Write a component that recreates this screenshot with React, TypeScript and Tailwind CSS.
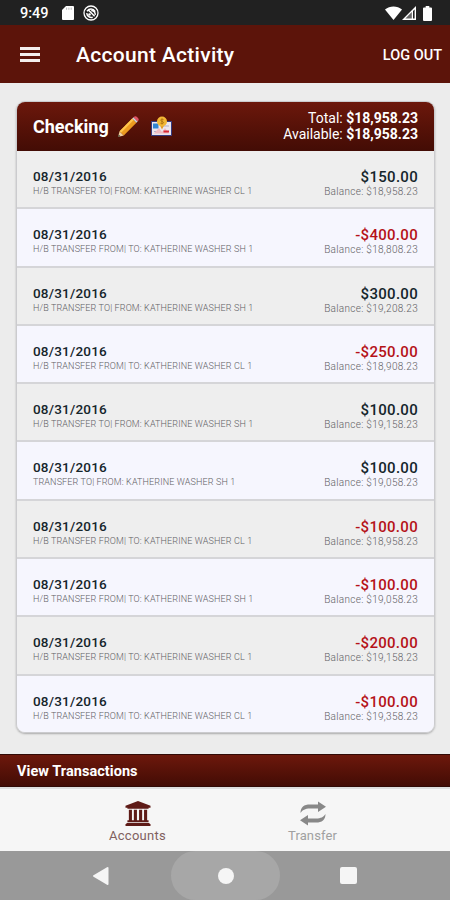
import React from "react";
import { clsx } from "clsx";

type Transaction = {
  id: number;
  date: string;
  description: string;
  amount: string;
  balance: string;
};

const transactions: Transaction[] = [
  { id: 1, date: "08/31/2016", description: "H/B TRANSFER TO| FROM: KATHERINE WASHER CL 1", amount: "$150.00", balance: "$18,958.23" },
  { id: 2, date: "08/31/2016", description: "H/B TRANSFER FROM| TO: KATHERINE WASHER SH 1", amount: "-$400.00", balance: "$18,808.23" },
  { id: 3, date: "08/31/2016", description: "H/B TRANSFER TO| FROM: KATHERINE WASHER SH 1", amount: "$300.00", balance: "$19,208.23" },
  { id: 4, date: "08/31/2016", description: "H/B TRANSFER FROM| TO: KATHERINE WASHER CL 1", amount: "-$250.00", balance: "$18,908.23" },
  { id: 5, date: "08/31/2016", description: "H/B TRANSFER TO| FROM: KATHERINE WASHER SH 1", amount: "$100.00", balance: "$19,158.23" },
  { id: 6, date: "08/31/2016", description: "TRANSFER TO| FROM: KATHERINE WASHER SH 1", amount: "$100.00", balance: "$19,058.23" },
  { id: 7, date: "08/31/2016", description: "H/B TRANSFER FROM| TO: KATHERINE WASHER CL 1", amount: "-$100.00", balance: "$18,958.23" },
  { id: 8, date: "08/31/2016", description: "H/B TRANSFER FROM| TO: KATHERINE WASHER SH 1", amount: "-$100.00", balance: "$19,058.23" },
  { id: 9, date: "08/31/2016", description: "H/B TRANSFER FROM| TO: KATHERINE WASHER CL 1", amount: "-$200.00", balance: "$19,158.23" },
  { id: 10, date: "08/31/2016", description: "H/B TRANSFER FROM| TO: KATHERINE WASHER CL 1", amount: "-$100.00", balance: "$19,358.23" },
];

function StatusBar() {
  return (
    <div className="flex h-[25px] shrink-0 items-center bg-[#212121] pt-px pr-[18px] pl-[20px] text-white">
      <span className="w-[42px] pt-[2px] text-[14.500px] leading-none font-medium">9:49</span>
      <svg className="h-[14px] w-[12px]" viewBox="0 0 12 14" fill="currentColor">
        <path d="M4 0h7a1 1 0 0 1 1 1v12a1 1 0 0 1-1 1H1a1 1 0 0 1-1-1V4z" />
        <path d="M4.6 1.6v2.2M6.9 1.6v2.2M9.2 1.6v2.2" stroke="#999" strokeWidth="0.7" />
      </svg>
      <svg className="ml-[9px] size-[16px]" viewBox="0 0 16 16" fill="none" stroke="currentColor">
        <circle cx="8" cy="8" r="7" strokeWidth="1.3" />
        <path d="M4 6.2C6 3.5 10 3 12.2 6.7M3.7 8.2c.4 3 3.2 4.8 6 4M5.2 4.8l6.4 6.4M8.2 5.6c2.4 0 4.3 1.8 4 4.2" strokeWidth="1.5" />
        <circle cx="6.5" cy="9.5" r="1.3" fill="currentColor" stroke="none" />
      </svg>
      <div className="ml-auto flex items-center">
        <svg className="h-[14px] w-[17px]" viewBox="0 0 17 14" fill="currentColor">
          <path d="M0 3.6C4.8-.6 12.2-.6 17 3.6L8.5 14z" />
        </svg>
        <svg className="h-[14px] w-[14px]" viewBox="0 0 14 14" fill="currentColor">
          <path d="M14 0v14H0z" />
          <path d="M9.8 6v6.400H3.400z" fill="#666" />
          <path d="M11 5 12.600 3.400v9H11z" fill="#212121" />
        </svg>
        <svg className="ml-[7px] h-[15px] w-[9px]" viewBox="0 0 9 15" fill="currentColor">
          <path d="M2.7 0h3.6v1.5H8a1 1 0 0 1 1 1V14a1 1 0 0 1-1 1H1a1 1 0 0 1-1-1V2.500a1 1 0 0 1 1-1h1.700z" />
        </svg>
      </div>
    </div>
  );
}

function PencilIcon() {
  return (
    <svg className="h-[21px] w-[21px]" viewBox="0 0 21 21">
      <path d="M0 21 1.600 15.200 5.800 19.400z" fill="#f0cfa0" />
      <path d="M0 21 .7 18.500 2.500 20.300z" fill="#443" />
      <path d="M1.600 15.200 14.200 2.600 18.400 6.800 5.800 19.400z" fill="#eb9a20" />
      <path d="M1.600 15.200 14.200 2.600 15.700 4.100 3.100 16.700z" fill="#ffc64c" />
      <path d="M14.200 2.600 15.500 1.300 19.700 5.500 18.400 6.800z" fill="#cfd5d8" />
      <path d="M15.500 1.300C16.900-.1 18 .1 19.500 1.500S21 4.200 19.700 5.500z" fill="#df5364" />
    </svg>
  );
}

function StatementIcon() {
  return (
    <svg className="h-[20px] w-[21px]" viewBox="0 0 21 20">
      <path d="M.5 5.500h20v14H.5z" fill="#ece6ed" stroke="#343a80" />
      <path d="M2 7.500h5.500v5H2z" fill="#3285d2" />
      <path d="M3 15.500h5M12 10h6" stroke="#b0adc6" />
      <path d="M3 17.500 8 12l3 4 3-4 4 5.500" fill="#eebbc1" />
      <path d="M12.500 14.500h5.500v2h-5.500z" fill="#d72835" />
      <path d="M9 9.500h4l-2 4z" fill="#e39a23" />
      <circle cx="11" cy="5.500" r="5" fill="#f2b735" />
      <path d="M12.500 3.700c-3-1.500-3.600 1.200-1.500 1.700 2.500.6 1.700 3-1.500 1.800M11 2.500v6" fill="none" stroke="#b17413" strokeWidth="1" />
    </svg>
  );
}

function TransactionRow({ item, index }: { item: Transaction; index: number }) {
  return (
    <div
      className={clsx(
        "flex min-h-0 flex-1 justify-between border-[#d5d5d8] px-[16px] pt-[17px]",
        index % 2 === 0 ? "bg-[#eeeeee]" : "bg-[#f6f6fe]",
        index > 0 && "border-t-2"
      )}
    >
      <div>
        <p className="text-[13.500px] leading-[16px] font-medium tracking-[0.2px] text-[#15252b]">{item.date}</p>
        <p className="text-[9px] leading-[15px] font-light tracking-[0.13px] whitespace-nowrap text-[#5f6064]">{item.description}</p>
      </div>
      <div className="text-right">
        <p
          className={clsx(
            "text-[15px] leading-[18px] font-medium tracking-[0.3px]",
            item.amount.startsWith("-") ? "text-[#b51218]" : "text-[#15252b]"
          )}
        >
          {item.amount}
        </p>
        <p className="text-[10px] leading-[12px] font-light tracking-[0.3px] text-[#5f6064]">Balance: {item.balance}</p>
      </div>
    </div>
  );
}

export default function App() {
  return (
    <main className="flex h-[900px] w-[450px] flex-col overflow-hidden bg-[#ececec] font-[Roboto,sans-serif]">
      <StatusBar />
      <header className="flex h-[58px] shrink-0 items-center bg-[#5c140a] pt-[4px] pr-[8px] pl-[20px] text-white">
        <div className="flex w-[56px] flex-col gap-[3px] pb-[3px]">
          <span className="h-[3px] w-[20px] bg-[#f4eeed]" />
          <span className="h-[3px] w-[20px] bg-[#f4eeed]" />
          <span className="h-[3px] w-[20px] bg-[#f4eeed]" />
        </div>
        <h1 className="text-[21px] font-medium tracking-[0.3px]">Account Activity</h1>
        <span className="ml-auto text-[14.500px] font-medium">LOG OUT</span>
      </header>

      <section className="mx-[16px] mt-[18px] flex h-[632px] w-[419px] shrink-0 flex-col overflow-hidden rounded-[9px] border border-[#cbcbce] shadow-[0_1px_2px_#aaa]">
        <div className="-mx-px -mt-px flex h-[50px] shrink-0 items-center bg-linear-to-b from-[#6d180c] to-[#430c05] px-[17px] text-white">
          <h2 className="w-[85px] text-[18px] font-bold">Checking</h2>
          <PencilIcon />
          <div className="ml-[12px]">
            <StatementIcon />
          </div>
          <div className="ml-auto text-right text-[14px] leading-[16px]">
            <p>
              Total: <b>$18,958.23</b>
            </p>
            <p>
              Available: <b>$18,958.23</b>
            </p>
          </div>
        </div>
        <div className="flex flex-1 flex-col">
          {transactions.map((item, i) => (
            <TransactionRow key={item.id} item={item} index={i} />
          ))}
        </div>
      </section>

      <div className="mt-[21px] flex h-[33px] shrink-0 items-center border-y border-[#310a06] bg-linear-to-b from-[#6d180c] to-[#430c05] pt-[2px] pl-[17px] text-[14.500px] font-bold tracking-[0.05px] text-white">
        View Transactions
      </div>

      <nav className="flex h-[64px] shrink-0 justify-center border-t-2 border-[#dedede] bg-[#f6f6f6] pt-[12px]">
        <div className="flex w-[175px] flex-col items-center text-[#5e1b17]">
          <svg className="h-[25px] w-[26px]" viewBox="0 0 26 26" fill="currentColor">
            <path d="M13 0 26 5v2h-2v1H2V7H0V5zM3.500 9h3.200v11h2V9h3.200v11h2.200V9h3.200v11h2V9h3.200v11H24v2H2v-2h1.500zM1 23h24v1h1v2H0v-2h1z" />
          </svg>
          <span className="mt-px text-[13px] leading-[18px] tracking-[0.3px] text-[#80605e]">Accounts</span>
        </div>
        <div className="flex w-[175px] flex-col items-center text-[#888888]">
          <svg className="h-[25px] w-[26px]" viewBox="0 0 26 25" fill="currentColor">
            <path d="M.5 12C.5 6 4 3.500 10 3.500h8V.5l8 5.200-8 5.300V7.500h-8C5 7.500 2.500 9 .5 12z" />
            <path d="M25.500 13c0 6-3.500 8.500-9.500 8.500H8v3l-8-5.200L8 14v3.500h8c5 0 7.500-1.500 9.500-4.500z" />
          </svg>
          <span className="mt-px text-[13px] leading-[18px] tracking-[0.1px] text-[#a0a0a0]">Transfer</span>
        </div>
      </nav>

      <div className="flex h-[49px] shrink-0 items-center bg-[#999999] pl-[93px] text-[#f5f5f5]">
        <svg className="h-[18px] w-[16px]" viewBox="0 0 16 18" fill="currentColor">
          <path d="M.5 8.300 14 .3q1.500-.8 1.500.8v15.800q0 1.600-1.500.8L.5 9.700q-1-.7 0-1.400z" />
        </svg>
        <div className="ml-[62px] flex h-[49px] w-[109px] items-center justify-center rounded-full bg-[#a7a7a7]">
          <span className="size-[16px] rounded-full bg-[#f5f5f5]" />
        </div>
        <span className="ml-[60px] size-[17px] rounded-[2px] bg-[#f5f5f5]" />
      </div>
    </main>
  );
}
